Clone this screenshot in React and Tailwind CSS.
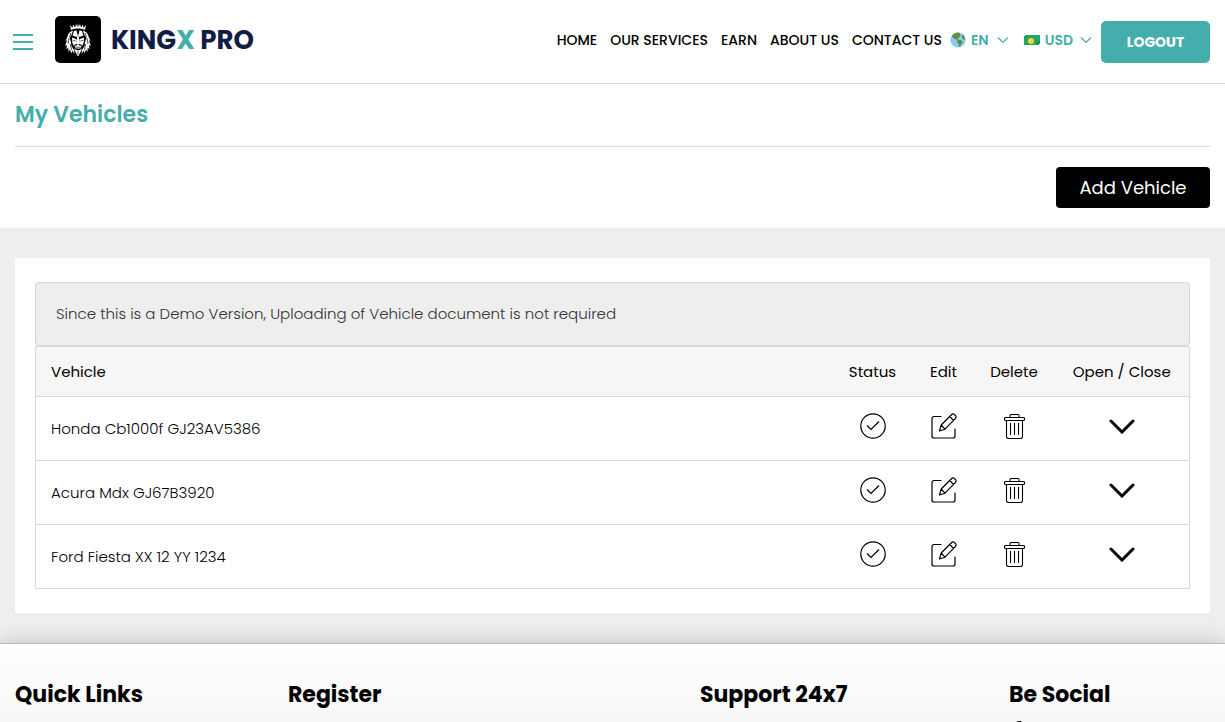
import { useState } from 'react';
import { FaFacebookF, FaInstagram, FaTwitter } from 'react-icons/fa';

const navLinks = ['Home', 'Our Services', 'Earn', 'About Us', 'Contact Us'];

const vehicles = [
    { id: 1, name: 'Honda Cb1000f GJ23AV5386' },
    { id: 2, name: 'Acura Mdx GJ67B3920' },
    { id: 3, name: 'Ford Fiesta XX 12 YY 1234' },
];

const LionLogo = () => (
    <svg viewBox="0 0 46 47" className="h-[47px] w-[46px] shrink-0" aria-hidden="true">
        <rect width="46" height="47" rx="5" fill="#000" />
        <g fill="#fff">
            {/* Crown */}
            <path d="M16 14l-1-5 2.500 3 .5-3.500 2 3 1-3.500 1.300 3L23 7l.7 4 1.300-3 1 3.500 2-3 .5 3.500L31 9l-1 5c-4-2-10-2-14 0z" />
            {/* Mane */}
            <path d="M18 14.500c-3 1-5 3-5.500 6L10.500 25l1.700-.8L10 30l2-1-.5 4.500 1.800-2 .2 4.500 1.500-2.500 1.500 4 .8-3 2.200 3.500-.5-4-2.500-4-.8-5-1.200-3 2-3z" />
            <path d="M28 14.500c3 1 5 3 5.500 6l2 4.500-1.700-.8L36 30l-2-1 .5 4.500-1.800-2-.2 4.500-1.500-2.500-1.500 4-.8-3-2.200 3.500.5-4 2.500-4 .8-5 1.200-3-2-3z" />
            {/* Face */}
            <path d="M19 15l2.500-.7.8 4-.5 2.700-4.300-1.500zM27 15l-2.500-.7-.8 4 .5 2.700 4.300-1.500z" />
            <path d="M17 21.500l4.500 1.700.3 4-3 2.500-1.500-3zM29 21.500l-4.500 1.700-.3 4 3 2.500 1.500-3z" />
            <path d="M22.500 18h1l1 8 .5 1.500-2 1.500-2-1.500.5-1.500zM19.500 30l3-1h1l3 1-1.200 2.500h-4.600z" />
            <path d="M19 32.500l2.500 1.500h3l2.500-1.500-1.500 3.500L23 40.500 20.500 36z" />
        </g>
        <g fill="none" stroke="#000" strokeWidth="0.7">
            <path d="M14 22l-1 6M16 17l-1.500 4M15.500 28l1 6M32 22l1 6M30 17l1.500 4M30.500 28l-1 6M18 24.500l2.500.5M28 24.500l-2.500.5M20.500 31.200h5M23 34.500v4" />
        </g>
    </svg>
);

const GlobeIcon = () => (
    <svg viewBox="0 0 16 16" className="size-4" aria-hidden="true">
        <circle cx="8" cy="8" r="7.600" fill="#88c9f9" />
        <path d="M1.500 4.500C3 2 5.500.600 8.500.500l1.700.7-.6 1.300 1.200.6-1.300 1.200.3 1-1.600.5-.6 1.500.8.7-.8.600-1.900-1.500-1.300-.2-1.200-1.500z" fill="#5c913b" />
        <path d="M7.300 8.200l2.200-.6 2.700 1.500.3 1.600-1.500 1.500-.8 2.600-1.200-.3-.2-2.600-1.700-1.700zM12.300 2l1.800 1.700 1 2.500-.2 1.800-1.800-.8-1.200-2.200z" fill="#5c913b" />
    </svg>
);

const CashIcon = () => (
    <svg viewBox="0 0 16 10" className="h-[10px] w-4" aria-hidden="true">
        <path d="M2 0h14v8l-2 2H0V2z" fill="#1fa861" />
        <path d="M0 3a3 3 0 003-3H2L0 2zM16 6a3 3 0 00-3 4h1l2-2z" fill="#128a4b" />
        <circle cx="7" cy="6" r="3" fill="#ffd13b" />
    </svg>
);

const SmallChevron = () => (
    <svg viewBox="0 0 12 8" className="h-2 w-3" fill="none" stroke="currentColor" strokeWidth="1.2" aria-hidden="true">
        <path d="M1 1.500l5 5 5-5" />
    </svg>
);

const StatusIcon = () => (
    <svg viewBox="0 0 26 26" className="size-[26px]" fill="none" stroke="currentColor" strokeWidth="1.2" aria-hidden="true">
        <circle cx="13" cy="13" r="12.200" />
        <path d="M7 12.500l4 4 8-8" />
    </svg>
);

const EditIcon = () => (
    <svg viewBox="0 0 26 26" className="size-[26px]" fill="none" stroke="currentColor" strokeWidth="1.2" strokeLinejoin="round" aria-hidden="true">
        <path d="M10 3.500H3a2 2 0 00-2 2V23a2 2 0 002 2h19a2 2 0 002-2v-7" strokeLinecap="round" />
        <path d="M8.500 18l1.700-6L20.700 1.500a1.800 1.800 0 012.600 0l1.200 1.200a1.800 1.800 0 010 2.600L14 16.200zM10.200 12l3.800 4.200M18.700 3.500l3.800 3.800" />
    </svg>
);

const TrashIcon = () => (
    <svg viewBox="0 0 21 26" className="h-[26px] w-[21px]" fill="none" stroke="currentColor" strokeWidth="1.1" strokeLinejoin="round" aria-hidden="true">
        <path d="M6 4.500V2.500a1 1 0 011-1h7a1 1 0 011 1v2" />
        <rect x="0.500" y="4.500" width="20" height="3" rx="1" />
        <path d="M2.500 7.500V23.500a2 2 0 002 2h12a2 2 0 002-2V7.500M6.500 10v12M10.500 10v12M14.500 10v12" />
    </svg>
);

const OpenIcon = ({ open }) => (
    <svg viewBox="0 0 28 16" className={`h-4 w-7 ${open ? 'rotate-180' : ''}`} fill="none" stroke="currentColor" strokeWidth="3" strokeLinecap="round" aria-hidden="true">
        <path d="M3 3l11 11 11-11" />
    </svg>
);

function Header() {
    return (
        <header className="flex h-[84px] shrink-0 items-center justify-between border-b border-[#d9d9d9] bg-white pr-[15px] pl-[13px]">
            <div className="flex items-center">
                <button type="button" aria-label="Menu" className="flex w-5 flex-col gap-[5px]">
                    <span className="h-[2px] bg-[#45adab]" />
                    <span className="h-[2px] bg-[#45adab]" />
                    <span className="h-[2px] bg-[#45adab]" />
                </button>
                <a href="#home" className="ml-[22px] flex items-center gap-[10px] pb-1">
                    <LionLogo />
                    <span className="text-[26px] leading-[38px] font-bold whitespace-nowrap text-[#131c45]">
                        KING<span className="text-[#45adab]">X</span> PRO
                    </span>
                </a>
            </div>

            <div className="flex items-center">
                <div className="flex items-center pb-[3px] text-sm leading-5 whitespace-nowrap">
                    <nav className="flex gap-[13px] font-medium uppercase">
                        {navLinks.map(link => (
                            <a key={link} href="#nav">{link}</a>
                        ))}
                    </nav>
                    <button type="button" className="ml-2 flex items-center font-semibold text-[#45adab]">
                        <GlobeIcon />
                        <span className="mr-2 ml-[5px]">EN</span>
                        <SmallChevron />
                    </button>
                    <button type="button" className="ml-[15px] flex items-center font-semibold text-[#45adab]">
                        <CashIcon />
                        <span className="mr-[7px] ml-[5px]">USD</span>
                        <SmallChevron />
                    </button>
                </div>
                <button type="button" className="ml-[9px] h-[42px] w-[109px] rounded-[5px] bg-[#45adab] text-sm font-bold text-white">
                    LOGOUT
                </button>
            </div>
        </header>
    );
}

function VehicleTable() {
    const [openId, setOpenId] = useState(null);

    return (
        <table className="w-full border-collapse text-[15px] text-black">
            <thead>
                <tr className="h-[50px] border border-[#d9d9d9] bg-[#f6f6f6]">
                    <th className="px-[15px] pt-[2px] text-left font-normal">Vehicle</th>
                    <th className="w-[82px] pt-[2px] font-normal">Status</th>
                    <th className="w-[60px] pt-[2px] font-normal">Edit</th>
                    <th className="w-[81px] pt-[2px] font-normal">Delete</th>
                    <th className="w-[135px] pt-[2px] font-normal">Open / Close</th>
                </tr>
            </thead>
            <tbody>
                {vehicles.map(vehicle => (
                    <tr key={vehicle.id} className="h-16 border border-[#d9d9d9]">
                        <td className="px-[15px] pt-[2px] font-light">{vehicle.name}</td>
                        <td className="pb-[6px]">
                            <button type="button" aria-label="Status" className="mx-auto block"><StatusIcon /></button>
                        </td>
                        <td className="pb-[6px]">
                            <button type="button" aria-label="Edit" className="mx-auto block"><EditIcon /></button>
                        </td>
                        <td className="pb-[6px]">
                            <button type="button" aria-label="Delete" className="mx-auto block"><TrashIcon /></button>
                        </td>
                        <td className="pb-[6px]">
                            <button
                                type="button"
                                aria-label="Open or close"
                                className="mx-auto block"
                                onClick={() => setOpenId(openId === vehicle.id ? null : vehicle.id)}
                            >
                                <OpenIcon open={openId === vehicle.id} />
                            </button>
                        </td>
                    </tr>
                ))}
            </tbody>
        </table>
    );
}

function Footer() {
    return (
        <footer className="relative grid flex-1 grid-cols-[273px_412px_309px_1fr] border-t border-[#bcbcbc] bg-linear-to-b from-white to-[#f6f6f6] px-[15px] pt-[35px] text-[22px] leading-8 font-bold text-black shadow-[0_0_20px_rgba(0,0,0,0.2)]">
            <h3>Quick Links</h3>
            <h3>Register</h3>
            <h3>Support 24x7</h3>
            <div>
                <h3>Be Social</h3>
                <div className="mt-[10px] flex items-center gap-6">
                    <a href="#facebook" aria-label="Facebook"><FaFacebookF size={16} /></a>
                    <a href="#twitter" aria-label="Twitter"><FaTwitter size={12} /></a>
                    <a href="#instagram" aria-label="Instagram"><FaInstagram size={12} /></a>
                </div>
            </div>
        </footer>
    );
}

export default function App() {
    return (
        <div className="flex h-screen flex-col overflow-hidden bg-white font-['Poppins','Inter',sans-serif] text-black">
            <Header />

            <section className="px-[15px] pb-5">
                <h1 className="border-b border-[#d9d9d9] pt-[15px] pb-[15px] text-[22px] leading-8 font-semibold text-[#45adab]">My Vehicles</h1>
                <div className="mt-5 flex justify-end">
                    <button type="button" className="h-[41px] w-[154px] rounded-sm bg-black text-lg leading-6 text-white">Add Vehicle</button>
                </div>
            </section>

            <main className="bg-[#eeeeee] px-[15px] py-[30px]">
                <div className="bg-white px-5 py-6">
                    <p className="rounded-sm border border-[#d4d4d4] bg-[#eeeeee] px-5 py-5 text-[15px] leading-[22px] font-light text-[#333]">
                        Since this is a Demo Version, Uploading of Vehicle document is not required
                    </p>
                    <VehicleTable />
                </div>
            </main>

            <Footer />
        </div>
    );
}
